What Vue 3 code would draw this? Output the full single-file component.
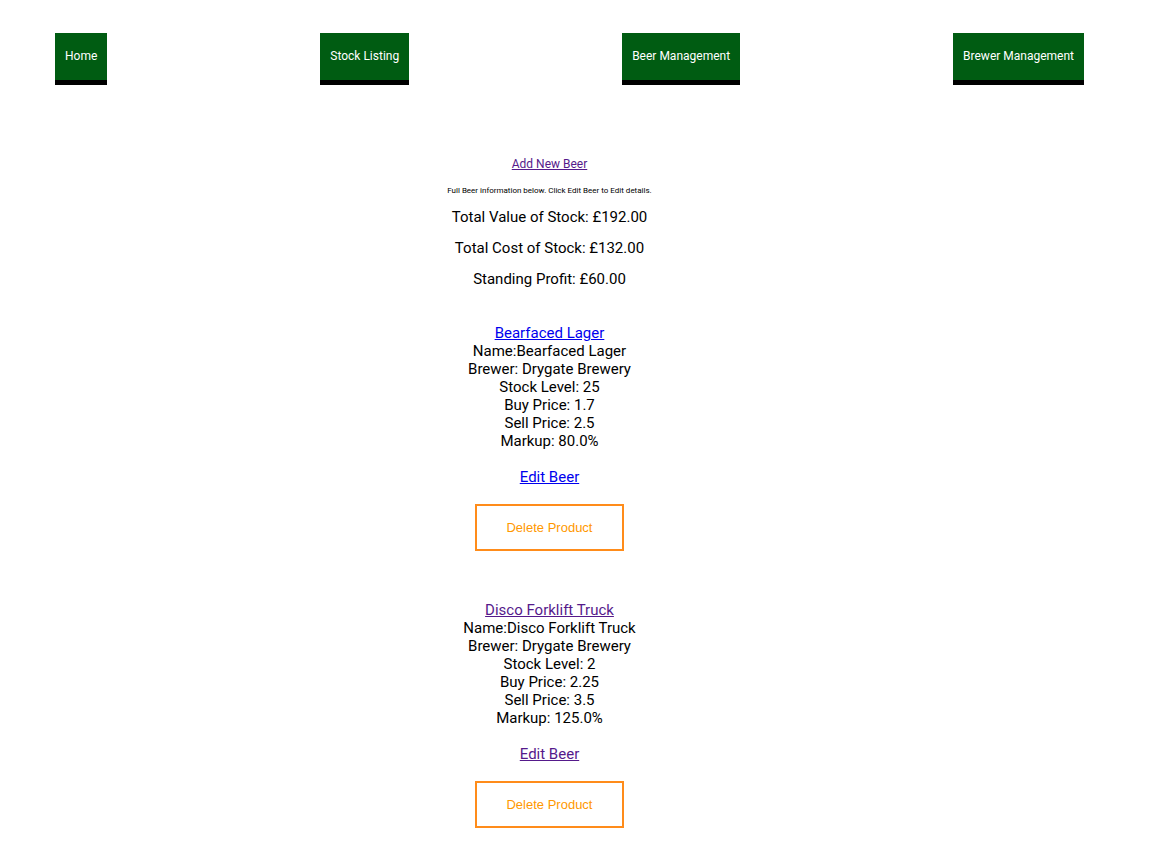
<script setup>
const pages = ['Home', 'Stock Listing', 'Beer Management', 'Brewer Management']
const totals = [
  'Total Value of Stock: £192.00',
  'Total Cost of Stock: £132.00',
  'Standing Profit: £60.00',
]
const beers = [
  { name: 'Bearfaced Lager', brewer: 'Drygate Brewery', stock: 25, buy: '1.7', sell: '2.5', markup: '80.0%', seen: false },
  { name: 'Disco Forklift Truck', brewer: 'Drygate Brewery', stock: 2, buy: '2.25', sell: '3.5', markup: '125.0%', seen: true },
]
</script>

<template>
  <div class="page">
    <nav>
      <ul class="menu">
        <li v-for="page in pages" :key="page"><a href="#">{{ page }}</a></li>
      </ul>
    </nav>
    <main>
      <a class="add seen" href="#">Add New Beer</a>
      <p class="hint">Full Beer information below. Click Edit Beer to Edit details.</p>
      <p v-for="total in totals" :key="total" class="total">{{ total }}</p>
      <section v-for="beer in beers" :key="beer.name" class="beer">
        <a href="#" :class="{ seen: beer.seen }">{{ beer.name }}</a>
        <div>Name:{{ beer.name }}</div>
        <div>Brewer: {{ beer.brewer }}</div>
        <div>Stock Level: {{ beer.stock }}</div>
        <div>Buy Price: {{ beer.buy }}</div>
        <div>Sell Price: {{ beer.sell }}</div>
        <div>Markup: {{ beer.markup }}</div>
        <a class="edit" href="#" :class="{ seen: beer.seen }">Edit Beer</a>
        <button type="button">Delete Product</button>
      </section>
    </main>
  </div>
</template>

<style>
body {
  background: #fff;
}
</style>

<style scoped>
.page {
  padding: 33px 82px 40px 55px;
  color: #000;
  font: 15px/18px Roboto, sans-serif;
}
.menu {
  display: flex;
  justify-content: space-between;
  margin: 0;
  padding: 0;
  list-style: none;
}
.menu a {
  display: block;
  padding: 14px 10px 15px;
  border-bottom: 5px solid #000;
  background: #005c12;
  color: #fff;
  font-size: 12px;
  text-decoration: none;
}
main {
  display: flex;
  flex-direction: column;
  align-items: center;
  margin: 70px 40px 0 0;
  text-align: center;
}
main a {
  color: #0000ee;
}
main a.seen {
  color: #551a8b;
}
.add {
  font-size: 12px;
}
.hint {
  margin: 13px 0 6px;
  font-size: 8px;
  line-height: 10px;
}
.total {
  margin: 6px 0 7px;
}
.beer {
  display: flex;
  flex-direction: column;
  align-items: center;
  margin-top: 29px;
}
.beer + .beer {
  margin-top: 50px;
}
.edit {
  margin: 18px 0;
}
button {
  min-width: 149px;
  padding: 14px 28px;
  border: 2px solid #ff8c1a;
  background: #fff;
  color: #ff9800;
  font: 13px/15px "Liberation Sans", Arial, sans-serif;
}
</style>
